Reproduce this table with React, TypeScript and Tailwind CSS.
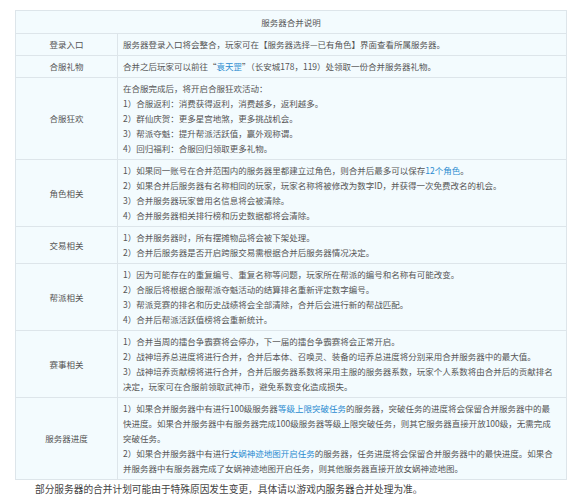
const Blue = ({ children }: { children: React.ReactNode }) => (
  <span className="text-[#2b8bd0]">{children}</span>
);

type Row = { label: string; lines: React.ReactNode[] };

// each entry is one visual line, broken where the reference breaks
const rows: Row[] = [
  {
    label: "登录入口",
    lines: ["服务器登录入口将会整合，玩家可在【服务器选择—已有角色】界面查看所属服务器。"],
  },
  {
    label: "合服礼物",
    lines: [
      <>
        合并之后玩家可以前往“<Blue>袁天罡</Blue>”（长安城178，119）处领取一份合并服务器礼物。
      </>,
    ],
  },
  {
    label: "合服狂欢",
    lines: [
      "在合服完成后，将开启合服狂欢活动：",
      "1）合服返利：消费获得返利，消费越多，返利越多。",
      "2）群仙庆贺：更多星宫地煞，更多挑战机会。",
      "3）帮派夺魁：提升帮派活跃值，赢外观称谓。",
      "4）回归福利：合服回归领取更多礼物。",
    ],
  },
  {
    label: "角色相关",
    lines: [
      <>
        1）如果同一账号在合并范围内的服务器里都建立过角色，则合并后最多可以保存<Blue>12个角色</Blue>。
      </>,
      "2）如果合并后服务器有名称相同的玩家，玩家名称将被修改为数字ID，并获得一次免费改名的机会。",
      "3）合并服务器玩家曾用名信息将会被清除。",
      "4）合并服务器相关排行榜和历史数据都将会清除。",
    ],
  },
  {
    label: "交易相关",
    lines: [
      "1）合并服务器时，所有摆摊物品将会被下架处理。",
      "2）合并后服务器是否开启跨服交易需根据合并后服务器情况决定。",
    ],
  },
  {
    label: "帮派相关",
    lines: [
      "1）因为可能存在的重复编号、重复名称等问题，玩家所在帮派的编号和名称有可能改变。",
      "2）合服后将根据合服帮派夺魁活动的结算排名重新评定数字编号。",
      "3）帮派竞赛的排名和历史战绩将会全部清除，合并后会进行新的帮战匹配。",
      "4）合并后帮派活跃值榜将会重新统计。",
    ],
  },
  {
    label: "赛事相关",
    lines: [
      "1）合并当周的擂台争霸赛将会停办，下一届的擂台争霸赛将会正常开启。",
      "2）战神培养总进度将进行合并，合并后本体、召唤灵、装备的培养总进度将分别采用合并服务器中的最大值。",
      "3）战神培养贡献榜将进行合并，合并后服务器系数将采用主服的服务器系数，玩家个人系数将由合并后的贡献排名",
      "决定，玩家可在合服前领取武神币，避免系数变化造成损失。",
    ],
  },
  {
    label: "服务器进度",
    lines: [
      <>
        1）如果合并服务器中有进行100级服务器<Blue>等级上限突破任务</Blue>的服务器，突破任务的进度将会保留合并服务器中的最
      </>,
      "快进度。如果合并服务器中有服务器完成100级服务器等级上限突破任务，则其它服务器直接开放100级，无需完成",
      "突破任务。",
      <>
        2）如果合并服务器中有进行<Blue>女娲神迹地图开启任务</Blue>的服务器，任务进度将会保留合并服务器中的最快进度。如果合
      </>,
      "并服务器中有服务器完成了女娲神迹地图开启任务，则其他服务器直接开放女娲神迹地图。",
    ],
  },
];

export default function App() {
  return (
    <div className="min-h-[501px] bg-white pt-[10px] pl-[15px] font-['Microsoft_YaHei','Noto_Sans_CJK_SC',sans-serif]">
      <table className="w-[552px] table-fixed border-collapse border border-[#dde5ea] bg-[#f3fbfe] text-[8.5px] leading-[15px] text-[#555]">
        <colgroup>
          <col className="w-[102px]" />
          <col />
        </colgroup>
        <tbody>
          <tr>
            <td colSpan={2} className="border border-[#dde5ea] py-[3.5px] text-center">
              服务器合并说明
            </td>
          </tr>
          {rows.map((row) => (
            <tr key={row.label}>
              <td className="border border-[#dde5ea] text-center align-middle">{row.label}</td>
              <td className="border border-[#dde5ea] px-[5px] py-[3px]">
                {row.lines.map((line, i) => (
                  <p key={i} className="whitespace-nowrap">
                    {line}
                  </p>
                ))}
              </td>
            </tr>
          ))}
        </tbody>
      </table>
      <p className="mt-[1px] indent-[20px] text-[9.7px] leading-[16px] text-[#444]">
        部分服务器的合并计划可能由于特殊原因发生变更，具体请以游戏内服务器合并处理为准。
      </p>
    </div>
  );
}
